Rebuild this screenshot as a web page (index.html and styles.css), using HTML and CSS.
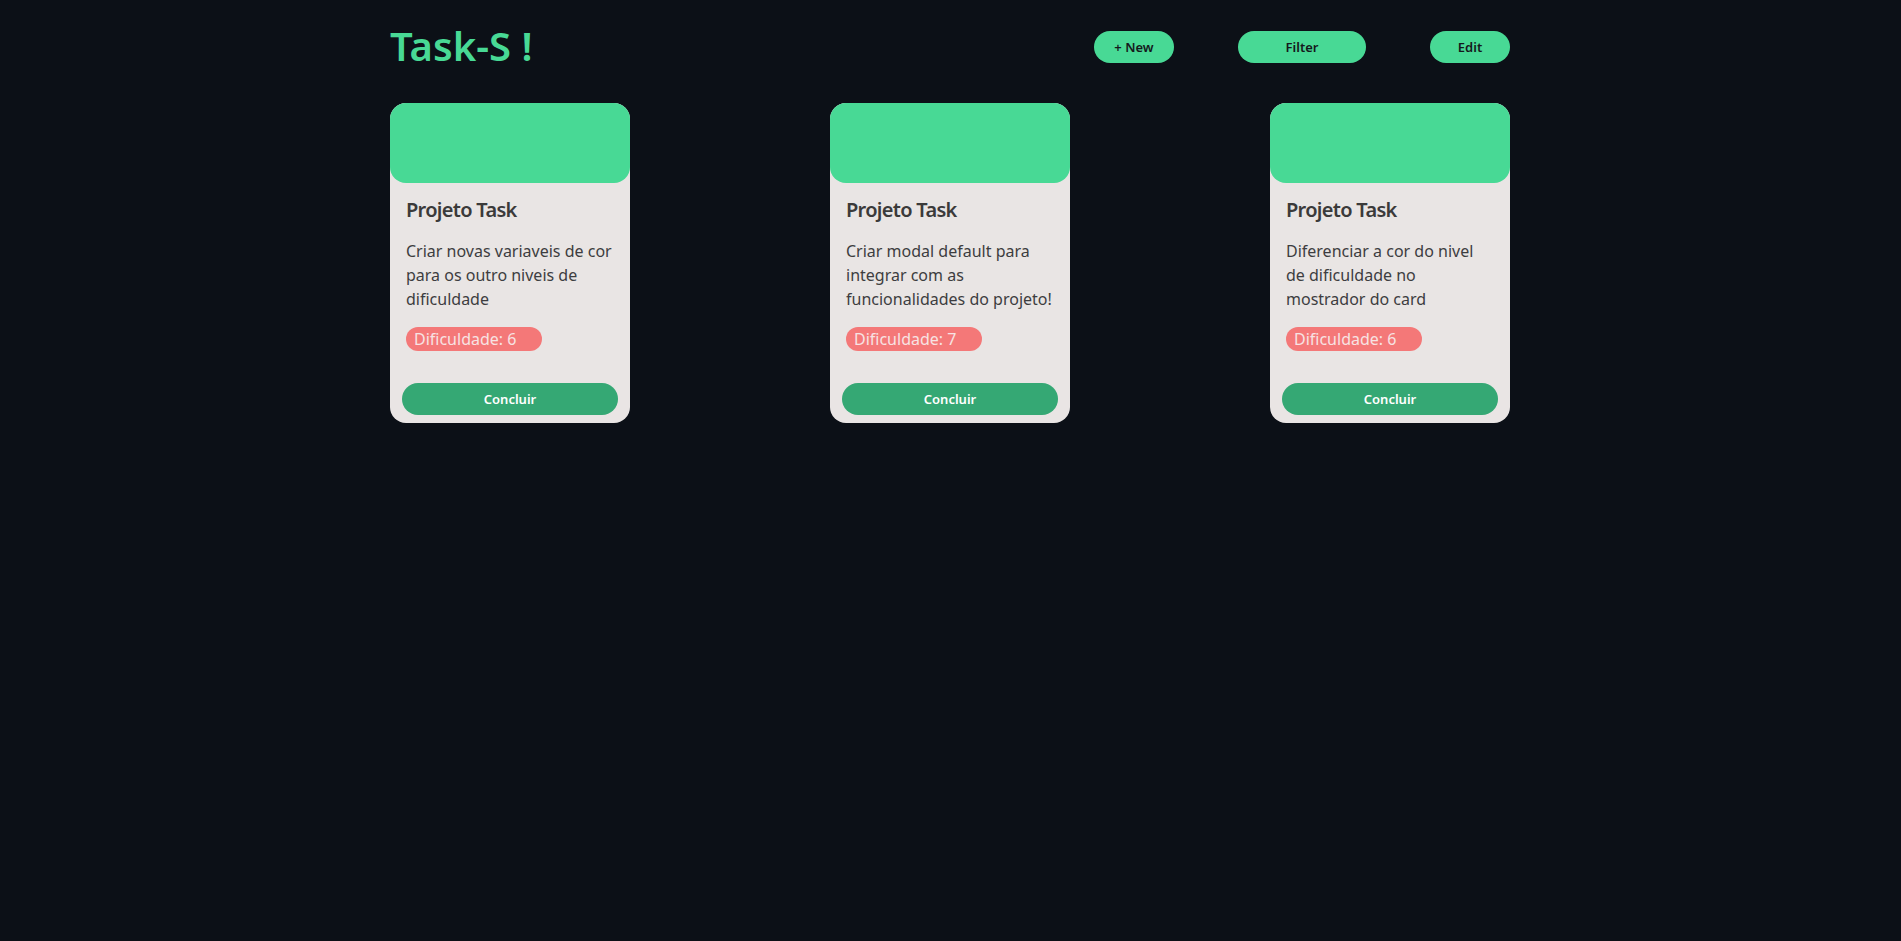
FILE: index.html
```html
<!DOCTYPE html>
<html lang="pt-BR">
<head>
<meta charset="utf-8">
<title>Task-S !</title>
<link rel="stylesheet" href="styles.css">
</head>
<body>
<div class="container">
  <header class="topbar">
    <h1 class="logo">Task-S !</h1>
    <nav class="actions">
      <button class="pill pill-sm">+ New</button>
      <button class="pill pill-lg">Filter</button>
      <button class="pill pill-sm">Edit</button>
    </nav>
  </header>
  <main class="cards">
    <article class="card">
      <div class="card-head"></div>
      <div class="card-body">
        <h2 class="card-title">Projeto Task</h2>
        <p class="card-text">Criar novas variaveis de cor para os outro niveis de dificuldade</p>
        <span class="badge">Dificuldade: 6</span>
      </div>
      <button class="done">Concluir</button>
    </article>
    <article class="card">
      <div class="card-head"></div>
      <div class="card-body">
        <h2 class="card-title">Projeto Task</h2>
        <p class="card-text">Criar modal default para integrar com as funcionalidades do projeto!</p>
        <span class="badge">Dificuldade: 7</span>
      </div>
      <button class="done">Concluir</button>
    </article>
    <article class="card">
      <div class="card-head"></div>
      <div class="card-body">
        <h2 class="card-title">Projeto Task</h2>
        <p class="card-text">Diferenciar a cor do nivel de dificuldade no mostrador do card</p>
        <span class="badge">Dificuldade: 6</span>
      </div>
      <button class="done">Concluir</button>
    </article>
  </main>
</div>
</body>
</html>
```
FILE: styles.css
```css
* { box-sizing: border-box; }

html, body {
  margin: 0;
  padding: 0;
  background: #0c1017;
  min-height: 100%;
}

body {
  font-family: "Noto Sans", "Open Sans", sans-serif;
  padding-right: 1px;
}

.container {
  width: 1120px;
  margin: 0 auto;
}

.topbar {
  display: flex;
  align-items: flex-start;
  justify-content: space-between;
  padding-top: 22px;
}

.logo {
  margin: 0;
  font-size: 40px;
  line-height: 48px;
  font-weight: 600;
  color: #48d995;
}

.actions {
  display: flex;
  gap: 64px;
  margin-top: 9px;
}

.pill {
  height: 32px;
  border: none;
  border-radius: 16px;
  background: #48d995;
  color: #15181c;
  font-family: inherit;
  font-size: 13px;
  font-weight: 600;
  cursor: pointer;
}

.pill-sm { width: 80px; }
.pill-lg { width: 128px; }

.cards {
  display: flex;
  justify-content: space-between;
  margin-top: 33px;
}

.card {
  width: 240px;
  height: 320px;
  background: #e9e5e4;
  border-radius: 16px;
  overflow: hidden;
  display: flex;
  flex-direction: column;
}

.card-head {
  height: 80px;
  background: #48d995;
  border-radius: 0 0 16px 16px;
}

.card-body {
  padding: 0 16px;
}

.card-title {
  margin: 15px 0 0;
  font-size: 20px;
  line-height: 24px;
  font-weight: 600;
  letter-spacing: -0.7px;
  color: #3b3a3a;
}

.card-text {
  margin: 17px 0 0;
  font-size: 16px;
  line-height: 24px;
  color: #3d3d40;
}

.badge {
  display: block;
  width: 136px;
  height: 24px;
  margin-top: 16px;
  padding-left: 8px;
  border-radius: 12px;
  background: #f47878;
  color: #f7e3e3;
  font-size: 16px;
  line-height: 24px;
}

.done {
  margin: auto 12px 8px;
  height: 32px;
  border: none;
  border-radius: 16px;
  background: #35a874;
  color: #ffffff;
  font-family: inherit;
  font-size: 13px;
  font-weight: 600;
  cursor: pointer;
}
```
